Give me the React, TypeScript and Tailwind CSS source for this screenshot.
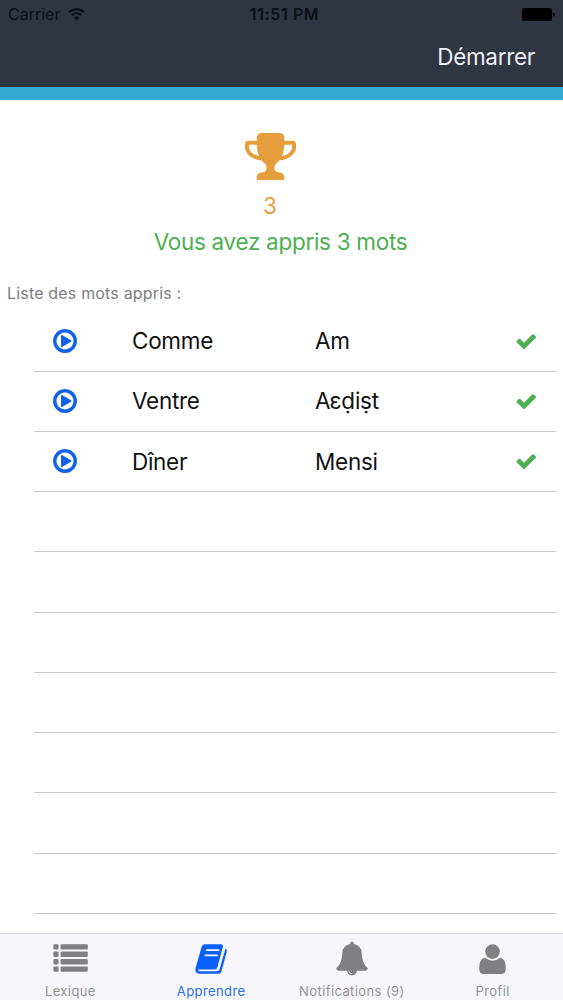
import type { ReactNode } from "react";

type Word = {
  fr: string;
  kab: string;
};

const words: Word[] = [
  { fr: "Comme", kab: "Am" },
  { fr: "Ventre", kab: "Aɛḍiṣt" },
  { fr: "Dîner", kab: "Mensi" },
];

const ROW_COUNT = 10;

const icons = {
  trophy:
    "M522 883q-74-162-74-371h-256v96q0 78 94.5 162t235.5 113zm1078-275v-96h-256q0 209-74 371 141-29 235.5-113t94.5-162zm128-128v128q0 71-41.5 143t-112 130-173 97.5-215.5 44.5q-42 54-95 95-38 34-52.5 72.5t-14.5 89.5q0 54 30.5 91t97.5 37q75 0 133.5 45.5t58.5 114.5v64q0 14-9 23t-23 9h-832q-14 0-23-9t-9-23v-64q0-69 58.5-114.5t133.5-45.5q67 0 97.5-37t30.5-91q0-51-14.5-89.5t-52.5-72.5q-53-41-95-95-113-5-215.5-44.5t-173-97.5-112-130-41.5-143v-128q0-40 28-68t68-28h288v-96q0-66 47-113t113-47h576q66 0 113 47t47 113v96h288q40 0 68 28t28 68z",
  check:
    "M1671 566q0 40-28 68l-724 724-136 136q-28 28-68 28t-68-28l-136-136-362-362q-28-28-28-68t28-68l136-136q28-28 68-28t68 28l294 295 656-657q28-28 68-28t68 28l136 136q28 28 28 68z",
  play: "M1312 896q0 37-32 55l-544 320q-15 9-32 9-16 0-32-8-32-19-32-56v-640q0-37 32-56 33-18 64 1l544 320q32 18 32 55zm128 0q0-148-73-273t-198-198-273-73-273 73-198 198-73 273 73 273 198 198 273 73 273-73 198-198 73-273zm224 0q0 209-103 385.5t-279.5 279.5-385.5 103-385.5-103-279.5-279.5-103-385.5 103-385.5 279.5-279.5 385.5-103 385.5 103 279.5 279.5 103 385.5z",
  bell: "M912 1696q0-16-16-16-59 0-101.5-42.5t-42.5-101.5q0-16-16-16t-16 16q0 73 51.5 124.5t124.5 51.5q16 0 16-16zm816-288q0 52-38 90t-90 38h-448q0 106-75 181t-181 75-181-75-75-181h-448q-52 0-90-38t-38-90q50-42 91-88t85-119.5 74.5-158.5 50-206 19.5-260q0-152 117-282.5t307-158.5q-8-19-8-39 0-40 28-68t68-28 68 28 28 68q0 20-8 39 190 28 307 158.5t117 282.5q0 139 19.5 260t50 206 74.5 158.5 85 119.5 91 88z",
};

function Icon({ name, className }: { name: keyof typeof icons; className: string }) {
  return (
    <svg viewBox="0 0 1792 1792" fill="currentColor" className={`shrink-0 ${className}`}>
      <path d={icons[name]} />
    </svg>
  );
}

function ListIcon() {
  return (
    <svg viewBox="0 0 35 35" fill="currentColor" className="size-[35px]">
      {[3.2, 10.6, 18, 25.4].map((y) => (
        <g key={y}>
          <rect x="0.4" y={y} width="5.2" height="5.4" rx="1.1" />
          <rect x="7.6" y={y} width="27.2" height="5.4" rx="1.1" />
        </g>
      ))}
    </svg>
  );
}

function BookIcon() {
  return (
    <svg viewBox="0 0 35 35" fill="none" className="size-[35px]">
      <path
        d="M11.2 3.3h15.6q2.7 0 2 2.7l-5.3 19.9q-.7 2.5-3 2.5H5.6q-2 0-1.4 1t2.2.9h16.6q2 0 2.6-2L30.8 9.8q.5-1.4.4-2.4 2.2.7 1.6 3.1L27.6 29.9q-.9 2.9-3.6 2.9H5.5q-2.4 0-3.6-1.8-.9-1.5-.5-3.3L7.5 6.2q.8-2.9 3.7-2.9z"
        fill="currentColor"
      />
      <path d="M12.6 9.2h12M11.3 14.3h12" stroke="#f7f6fa" strokeWidth="1.8" strokeLinecap="round" />
    </svg>
  );
}

function UserIcon() {
  return (
    <svg viewBox="0 0 35 35" fill="currentColor" className="size-[35px]">
      <circle cx="17.5" cy="10.6" r="7.3" />
      <path d="M4.2 27.5Q4.2 17.5 9.8 16.8q7.7 6 15.4 0 5.6.7 5.6 10.7 0 5.5-4.8 5.5H9q-4.8 0-4.8-5.5z" />
    </svg>
  );
}

function StatusBar() {
  return (
    <div className="grid h-7 grid-cols-3 items-center pl-2 pr-2 text-[#0b101a]">
      <div className="flex items-center gap-2">
        <span className="text-[16px]">Carrier</span>
        <svg viewBox="0 0 17 13" fill="none" stroke="currentColor" className="h-[13px] w-[17px]">
          <path d="M1 4.4a10.8 10.8 0 0 1 15 0" strokeWidth="2" />
          <path d="M3.7 7.3a6.9 6.9 0 0 1 9.6 0" strokeWidth="2" />
          <path d="M8.5 12.6 5.7 9.7a4 4 0 0 1 5.6 0z" fill="currentColor" stroke="none" />
        </svg>
      </div>
      <span className="pl-1.5 text-center text-[16px] font-semibold tracking-[0.6px]">11:51 PM</span>
      <svg viewBox="0 0 33 13" fill="#000" className="h-[13px] w-[33px] justify-self-end">
        <rect width="30" height="13" rx="2.5" />
        <path d="M31 4.3q2 .6 2 2.2t-2 2.2z" />
      </svg>
    </div>
  );
}

function Row({ word }: { word?: Word }) {
  return (
    <li className="flex h-[60.25px] items-center border-b border-[#c5c5c7]">
      {word && (
        <>
          <Icon name="play" className="ml-[17px] size-7 text-[#0f62e8]" />
          <span className="ml-[53px] w-[183px] text-[22.5px] tracking-[-0.3px]">{word.fr}</span>
          <span className="flex-1 text-[22.5px] tracking-[-0.25px]">{word.kab}</span>
          <Icon name="check" className="mr-[19px] size-[22.5px] text-[#4caf50]" />
        </>
      )}
    </li>
  );
}

function Tab({ icon, active, children }: { icon: ReactNode; active?: boolean; children: ReactNode }) {
  return (
    <button
      className={`flex flex-1 flex-col items-center pt-[7px] ${active ? "text-[#0a60ff]" : "text-[#808083]"}`}
    >
      {icon}
      <span
        className={`mt-[7px] whitespace-nowrap text-[13px] leading-4 tracking-[0.4px] ${active ? "text-[#2a70ec]" : "text-[#929295]"}`}
      >
        {children}
      </span>
    </button>
  );
}

export default function App() {
  return (
    <div className="flex h-[1000px] w-[563px] flex-col overflow-hidden bg-white font-['Inter',sans-serif] text-[#111]">
      <header className="h-[100px] shrink-0 border-b-[13px] border-[#34a9d4] bg-[#2f3542]">
        <StatusBar />
        <div className="flex h-[58px] items-center justify-end pr-7">
          <button className="text-[22.5px] tracking-[-0.3px] text-[#eef0f5]">Démarrer</button>
        </div>
      </header>

      <main className="flex-1 overflow-hidden">
        <div className="flex flex-col items-center pt-[29px]">
          <Icon name="trophy" className="mr-[23px] size-[55px] text-[#e69d3c]" />
          <span className="mr-[23px] mt-[7px] text-[22.5px] leading-[30px] text-[#e69d3c]">3</span>
          <p className="mt-[6px] pr-0.5 text-[22.5px] leading-[30px] tracking-[-0.3px] text-[#4caf50]">
            Vous avez appris 3 mots
          </p>
        </div>
        <h2 className="mt-[25px] pl-[7px] text-[16px] leading-[22px] tracking-[0.18px] text-[#7d7d7f]">
          Liste des mots appris :
        </h2>
        <ul className="ml-[34px] mr-[7px] mt-[7.3px]">
          {Array.from({ length: ROW_COUNT }, (_, i) => (
            <Row key={i} word={words[i]} />
          ))}
        </ul>
      </main>

      <nav className="flex h-[67px] shrink-0 border-t border-[#d0d0d3] bg-[#f7f6fa]">
        <Tab icon={<ListIcon />}>Lexique</Tab>
        <Tab icon={<BookIcon />} active>
          Apprendre
        </Tab>
        <Tab icon={<Icon name="bell" className="h-[35px] w-[34px]" />}>Notifications (9)</Tab>
        <Tab icon={<UserIcon />}>Profil</Tab>
      </nav>
    </div>
  );
}
